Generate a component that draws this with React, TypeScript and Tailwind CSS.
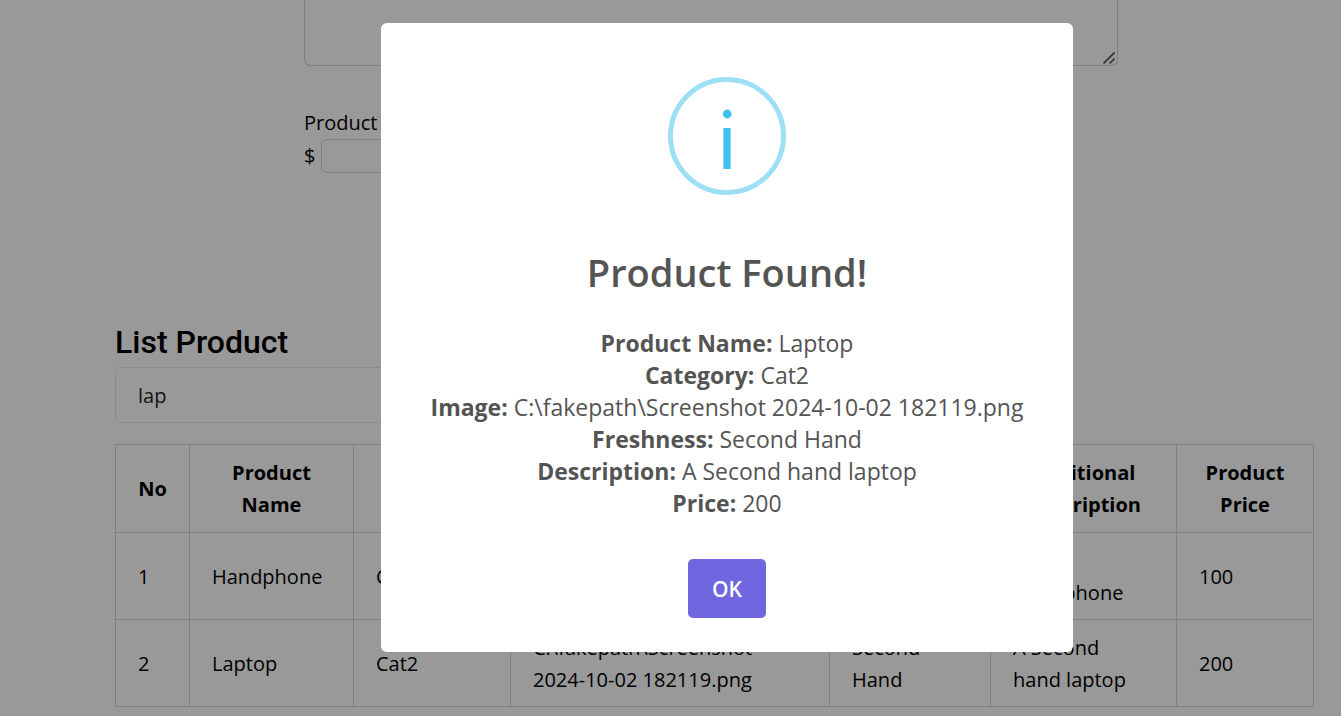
import { useState } from "react";

type Product = {
  name: string;
  category: string;
  image: string;
  freshness: string;
  description: string;
  price: number;
};

const products: Product[] = [
  {
    name: "Handphone",
    category: "Cat1",
    image: "C:\\fakepath\\Screenshot 2024-10-02 182119.png",
    freshness: "Brand New",
    description: "A New Handphone",
    price: 100,
  },
  {
    name: "Laptop",
    category: "Cat2",
    image: "C:\\fakepath\\Screenshot 2024-10-02 182119.png",
    freshness: "Second Hand",
    description: "A Second hand laptop",
    price: 200,
  },
];

const columns = [
  { label: "No", width: "w-[74px]" },
  { label: "Product Name", width: "w-[164px]" },
  { label: "Product Category", width: "w-[157px]" },
  { label: "Image of Product", width: "w-[319px]" },
  { label: "Product Freshness", width: "w-[161px]" },
  { label: "Additional Description", width: "w-[186px]" },
  { label: "Product Price", width: "w-[137px]" },
];

function InfoIcon() {
  return (
    <svg className="size-[118px]" viewBox="0 0 118 118" aria-hidden="true">
      <circle cx="59" cy="59" r="56.5" fill="none" stroke="#9de0f6" strokeWidth="5" />
      <circle cx="59.2" cy="37" r="4.4" fill="#3fc3ee" />
      <rect x="55.4" y="51" width="7.2" height="41" fill="#3fc3ee" />
    </svg>
  );
}

function ResizeGrip() {
  return (
    <svg
      className="pointer-events-none absolute right-[3px] bottom-[2px] size-3"
      viewBox="0 0 12 12"
      fill="none"
      stroke="#555"
      strokeWidth="1.6"
      aria-hidden="true"
    >
      <path d="M0.5 11.5 11.5 0.5M6.5 11.5l5-5" />
    </svg>
  );
}

function ProductForm() {
  return (
    <form className="mr-[196px] ml-[189px]">
      <div className="relative">
        <textarea
          aria-label="Additional description"
          className="block h-[66px] w-full resize-none rounded-b-md border border-t-0 border-[#d2d4da] bg-white"
        />
        <ResizeGrip />
      </div>
      <label htmlFor="price" className="mt-[41px] block">
        Product Price
      </label>
      <div className="flex items-center gap-1.5">
        <span>$</span>
        <input
          id="price"
          className="h-[34px] w-64 rounded-md border border-[#d2d4da] bg-white px-2"
        />
      </div>
    </form>
  );
}

function ProductTable() {
  return (
    <table className="mt-[21px] w-full table-fixed border-collapse">
      <thead>
        <tr className="h-[88px]">
          {columns.map((c) => (
            <th
              key={c.label}
              className={`${c.width} border border-[#d2d5d9] px-[21px] py-2.5 text-center font-bold`}
            >
              {c.label}
            </th>
          ))}
        </tr>
      </thead>
      <tbody>
        {products.map((p, i) => (
          <tr key={p.name} className="h-[87px]">
            {[i + 1, p.name, p.category, p.image, p.freshness, p.description, p.price].map(
              (value, j) => (
                <td key={j} className="border border-[#d2d5d9] pt-3 pr-7 pb-2.5 pl-[22px]">
                  {value}
                </td>
              ),
            )}
          </tr>
        ))}
      </tbody>
    </table>
  );
}

function ProductDialog({ product, onClose }: { product: Product; onClose: () => void }) {
  const details = [
    ["Product Name", product.name],
    ["Category", product.category],
    ["Image", product.image],
    ["Freshness", product.freshness],
    ["Description", product.description],
    ["Price", product.price],
  ];
  return (
    <div className="fixed inset-0 flex items-start justify-center bg-black/40 pt-[23px] pl-[113px]">
      <div
        role="dialog"
        aria-modal="true"
        aria-labelledby="dialog-title"
        className="flex w-[692px] flex-col items-center rounded-md bg-white pt-[54px] pb-[34px] text-center text-[#545454]"
      >
        <InfoIcon />
        <h2 id="dialog-title" className="mt-[52px] text-[38px] leading-[50px] font-semibold">
          Product Found!
        </h2>
        <div className="mt-[30px] text-[23px] leading-8">
          {details.map(([label, value]) => (
            <p key={label}>
              <b>{label}:</b> {value}
            </p>
          ))}
        </div>
        <button
          type="button"
          onClick={onClose}
          className="mt-10 h-[59px] w-[78px] rounded-[5px] bg-[#7066e0] text-[21px] font-semibold text-white"
        >
          OK
        </button>
      </div>
    </div>
  );
}

export default function App() {
  const [query, setQuery] = useState("lap");
  const [found, setFound] = useState<Product | null>(products[1]);

  return (
    <div className="bg-white font-['Open_Sans','Noto_Sans',sans-serif] text-[20px] leading-8 text-black">
      <main className="mr-[27px] ml-[115px]">
        <ProductForm />
        <section className="mt-[149px]">
          <h2 className="font-['Roboto',sans-serif] text-[32px] leading-10 font-medium">
            List Product
          </h2>
          <input
            aria-label="Search product"
            value={query}
            onChange={(e) => setQuery(e.target.value)}
            className="mt-[5px] block h-14 w-1/2 rounded-md border border-[#e5e7eb] bg-white px-[22px] text-[#212529]"
          />
          <ProductTable />
        </section>
      </main>
      {found && <ProductDialog product={found} onClose={() => setFound(null)} />}
    </div>
  );
}
